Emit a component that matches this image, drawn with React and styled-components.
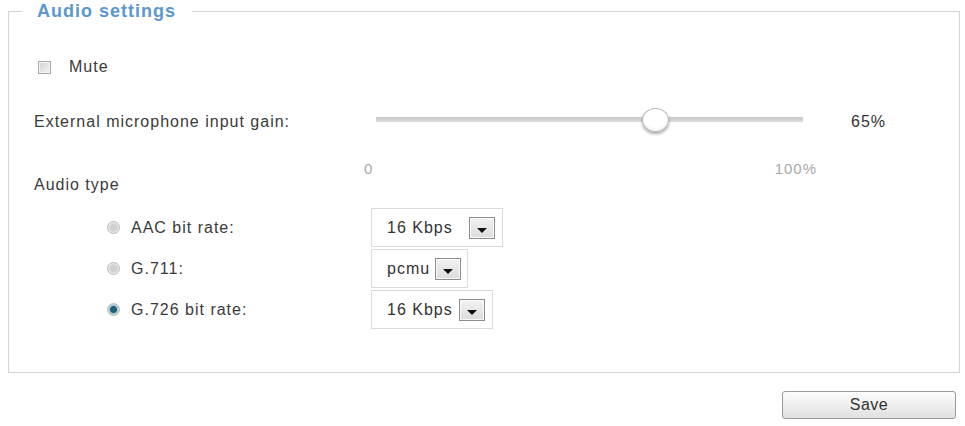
import React from "react";
import styled, { createGlobalStyle } from "styled-components";

const GlobalStyle = createGlobalStyle`
  html, body {
    margin: 0;
    padding: 0;
    background: #ffffff;
    font-family: "Liberation Sans", Arial, sans-serif;
    color: #3a3a3a;
  }
`;

const codecs = [
  { id: "aac", label: "AAC bit rate:", value: "16 Kbps", width: 132, gap: 16 },
  { id: "g711", label: "G.711:", value: "pcmu", width: 97, gap: 5 },
  { id: "g726", label: "G.726 bit rate:", value: "16 Kbps", width: 122, gap: 6, checked: true },
];

function DropArrow() {
  return (
    <svg width="10" height="5" viewBox="0 0 10 5">
      <path d="M0 0 L10 0 L5 5 Z" fill="#111" />
    </svg>
  );
}

export default function App() {
  const gain = 65;
  return (
    <>
      <GlobalStyle />
      <Page>
        <Fieldset>
          <Legend>Audio settings</Legend>

          <MuteRow>
            <Checkbox />
            <span>Mute</span>
          </MuteRow>

          <GainRow>
            <Label>External microphone input gain:</Label>
            <SliderBox>
              <Track>
                <Thumb style={{ left: `${gain}%` }} />
              </Track>
              <Scale>
                <span>0</span>
                <span>100%</span>
              </Scale>
            </SliderBox>
            <Value>{gain}%</Value>
          </GainRow>

          <Label>Audio type</Label>

          <CodecList>
            {codecs.map((c) => (
              <CodecRow key={c.id}>
                <RadioLabel>
                  <Radio $checked={c.checked} />
                  <span>{c.label}</span>
                </RadioLabel>
                <Select $width={c.width} $gap={c.gap}>
                  <span>{c.value}</span>
                  <DropButton>
                    <DropArrow />
                  </DropButton>
                </Select>
              </CodecRow>
            ))}
          </CodecList>
        </Fieldset>

        <Footer>
          <SaveButton>Save</SaveButton>
        </Footer>
      </Page>
    </>
  );
}

const Page = styled.div`
  width: 965px;
  height: 426px;
  padding: 0 5px 0 8px;
  box-sizing: border-box;
  font-size: 16px;
  letter-spacing: 1px;
`;

const Fieldset = styled.fieldset`
  margin: 0;
  padding: 0 0 0 25px;
  border: 1px solid #d4d4d4;
  height: 373px;
  box-sizing: border-box;
`;

const Legend = styled.legend`
  margin-left: -12px;
  padding: 0 16px 0 15px;
  font-size: 18px;
  line-height: 22px;
  font-weight: bold;
  color: #5a98cf;
  letter-spacing: 1px;
`;

const MuteRow = styled.label`
  display: flex;
  align-items: center;
  gap: 18px;
  height: 18px;
  margin: 36px 0 0 4px;
  color: #3a3a3a;
`;

const Checkbox = styled.span`
  width: 11px;
  height: 11px;
  border: 1px solid #a8a8a8;
  box-shadow: inset 0 0 0 1px #f4f4f4;
  background: linear-gradient(135deg, #d4d4d4, #f2f2f2);
`;

const GainRow = styled.div`
  display: grid;
  grid-template-columns: 342px 427px auto;
  align-items: start;
  margin-top: 36px;
  height: 63px;
`;

const Label = styled.div`
  line-height: 20px;
  color: #3a3a3a;
`;

const SliderBox = styled.div`
  padding-top: 5px;
`;

const Track = styled.div`
  position: relative;
  height: 5px;
  background: linear-gradient(#c9c9c9, #dcdcdc);
`;

const Thumb = styled.div`
  position: absolute;
  top: 50%;
  width: 25px;
  height: 22px;
  margin: -12px 0 0 -12px;
  border-radius: 50%;
  background: radial-gradient(circle at 50% 35%, #ffffff 55%, #e2e2e2);
  border: 1px solid #bbbbbb;
  box-shadow: 0 2px 3px rgba(0, 0, 0, 0.35);
`;

const Scale = styled.div`
  display: flex;
  justify-content: space-between;
  margin: 38px -14px 0 -12px;
  font-size: 15px;
  line-height: 18px;
  color: #a8a8a8;
`;

const Value = styled.div`
  margin-left: 48px;
  line-height: 20px;
  color: #333;
`;

const CodecList = styled.div`
  display: flex;
  flex-direction: column;
  gap: 2px;
  margin: 13px 0 0 73px;
`;

const CodecRow = styled.div`
  display: flex;
  align-items: center;
`;

const RadioLabel = styled.label`
  width: 264px;
  display: flex;
  align-items: center;
  gap: 11px;
  color: #3a3a3a;
`;

const Radio = styled.span`
  width: 11px;
  height: 11px;
  border-radius: 50%;
  border: 1px solid #bcbcbc;
  background: ${(p) =>
    p.$checked
      ? "radial-gradient(circle, #1f5f78 0 3px, #aac4cf 4px, #eef2f3)"
      : "radial-gradient(circle, #d0d0d0 0 3px, #e6e6e6 5px, #f4f4f4)"};
`;

const Select = styled.div`
  width: ${(p) => p.$width}px;
  height: 39px;
  box-sizing: border-box;
  border: 1px solid #dadada;
  display: flex;
  align-items: center;
  gap: ${(p) => p.$gap}px;
  padding: 0 5px 0 15px;
  color: #333;
`;

const DropButton = styled.span`
  width: 26px;
  height: 22px;
  border: 1px solid #8c8c8c;
  box-shadow: inset 0 0 0 1px #fafafa;
  background: linear-gradient(#f2f2f2, #dcdcdc);
  display: flex;
  align-items: flex-end;
  justify-content: center;
  padding-bottom: 5px;
  box-sizing: border-box;
  flex-shrink: 0;
`;

const Footer = styled.div`
  display: flex;
  justify-content: flex-end;
  margin-top: 18px;
  padding-right: 4px;
`;

const SaveButton = styled.button`
  width: 174px;
  height: 28px;
  border: 1px solid #9a9a9a;
  border-radius: 3px;
  background: linear-gradient(#fdfdfd, #e0e0e0);
  font-family: "Liberation Sans", Arial, sans-serif;
  font-size: 16px;
  letter-spacing: 0.5px;
  color: #333;
`;
